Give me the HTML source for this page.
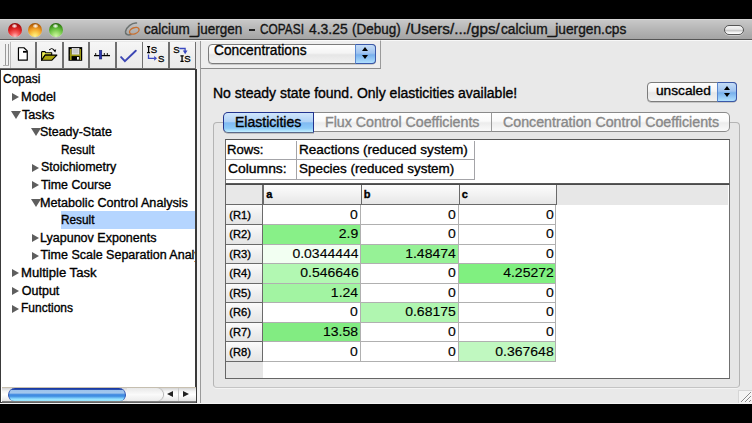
<!DOCTYPE html>
<html><head><meta charset="utf-8"><style>
*{margin:0;padding:0;box-sizing:border-box}
html,body{width:752px;height:423px;overflow:hidden;background:#000}
body{position:relative;font-family:"Liberation Sans",sans-serif;color:#000}
.a{position:absolute}
.t{position:absolute;white-space:nowrap;line-height:1}
.tx{-webkit-text-stroke:0.35px currentColor}
.tl{position:absolute;width:14px;height:14px;border-radius:50%;box-shadow:0 0.5px 0.8px rgba(230,240,240,.7)}
.hl{position:absolute;left:4.5px;top:1.6px;width:5px;height:3.4px;border-radius:50%;background:radial-gradient(ellipse at 50% 50%,rgba(255,255,255,1),rgba(255,255,255,.5) 55%,rgba(255,255,255,0))}
.tri-r{position:absolute;width:0;height:0;border-top:4.6px solid transparent;border-bottom:4.6px solid transparent;border-left:7.8px solid #5e5e5e}
.tri-d{position:absolute;width:0;height:0;border-left:5px solid transparent;border-right:5px solid transparent;border-top:8.3px solid #5e5e5e}
.num{position:absolute;line-height:1;white-space:nowrap;text-align:right;font-size:12.4px;-webkit-text-stroke:0.12px #000}
.num span{display:inline-block;transform:scaleX(1.13);transform-origin:100% 50%}
</style></head><body>
<div class="a" style="left:0px;top:19px;width:752px;height:385px;background:#e9e9e9"></div>
<div class="a" style="left:0px;top:19px;width:752px;height:21px;background:linear-gradient(#e2e2e2 0px,#c8c8c8 1px,#b6b6b6 10px,#a4a4a4 20px);border-bottom:1px solid #555"></div>
<div class="tl" style="left:7.699999999999999px;top:22.9px;background:radial-gradient(circle at 50% 95%,#ffc0c0 0,#f86060 25%,#e02828 50%,#b01010 75%,#6a0808 100%)"><div class="hl"></div></div>
<div class="tl" style="left:28.200000000000003px;top:22.9px;background:radial-gradient(circle at 50% 95%,#fff490 0,#fcd050 25%,#f0a028 50%,#c06808 75%,#703808 100%)"><div class="hl"></div></div>
<div class="tl" style="left:48.8px;top:22.9px;background:radial-gradient(circle at 50% 95%,#d0f8a8 0,#a0e070 25%,#68c040 50%,#3a8a18 75%,#123a08 100%)"><div class="hl"></div></div>
<svg class="a" style="left:123px;top:21px" width="20" height="17" viewBox="0 0 20 17">
<path d="M13.5 2 C9 1.5 3.5 6 2.5 10.5 C2 13.5 5 14.5 8 13.5" fill="none" stroke="#6c7270" stroke-width="1.5" stroke-linecap="round"/>
<ellipse cx="11.3" cy="9.8" rx="5" ry="3" transform="rotate(-22 11.3 9.8)" fill="none" stroke="#c87030" stroke-width="1.4"/>
</svg>
<div class="t tx" style="left:144.00px;top:21.76px;font-size:14px;transform:scaleX(0.9627);transform-origin:0 0;color:#141414">calcium_juergen</div>
<div class="a" style="left:249.4px;top:29.3px;width:5.4px;height:1.3px;background:#222"></div>
<div class="t tx" style="left:260.10px;top:21.76px;font-size:14px;transform:scaleX(0.8471);transform-origin:0 0;color:#141414">COPASI</div>
<div class="t tx" style="left:308.80px;top:21.76px;font-size:14px;transform:scaleX(0.9923);transform-origin:0 0;color:#141414">4.3.25</div>
<div class="t tx" style="left:352.14px;top:21.76px;font-size:14px;transform:scaleX(0.9633);transform-origin:0 0;color:#141414">(Debug)</div>
<div class="t tx" style="left:406.40px;top:21.76px;font-size:14px;transform:scaleX(1.0862);transform-origin:0 0;color:#141414">/Users/.../gps/</div>
<div class="t tx" style="left:501.30px;top:21.76px;font-size:14px;transform:scaleX(0.9819);transform-origin:0 0;color:#141414">calcium_juergen.cps</div>
<div class="a" style="left:724.4px;top:24.9px;width:19.8px;height:10px;border-radius:5px;border:1.3px solid #555;box-shadow:0 0.7px 0.5px rgba(255,255,255,.5);background:linear-gradient(#f4f4f4,#e8e8e8 40%,#c8c8c8 55%,#f8f8f8 85%,#ffffff)"></div>
<div class="a" style="left:0px;top:40px;width:752px;height:1px;background:#f8f8f8"></div>
<div class="a" style="left:0px;top:40px;width:196px;height:29px;background:#e8e8e8;border-top:1px solid #fafafa;border-bottom:1.5px solid #6c6c6c"></div>
<div class="a" style="left:0px;top:41px;width:10px;height:26.5px;background:#f2f2f2"></div>
<div class="a" style="left:4.6px;top:43.6px;width:1.1px;height:22px;background:#9a9a9a"></div>
<div class="a" style="left:7.7px;top:43.6px;width:1.1px;height:22px;background:#9a9a9a"></div>
<div class="a" style="left:3.2px;top:65.2px;width:6px;height:0.8px;background:#b0b0b0"></div>
<div class="a" style="left:10px;top:42px;width:26px;height:25.5px;background:linear-gradient(#f6f6f6,#efefef 50%,#ebebeb)"></div>
<div class="a" style="left:36.8px;top:42px;width:25.9px;height:25.5px;background:linear-gradient(#f6f6f6,#efefef 50%,#ebebeb)"></div>
<div class="a" style="left:63.5px;top:42px;width:25.6px;height:25.5px;background:linear-gradient(#f6f6f6,#efefef 50%,#ebebeb)"></div>
<div class="a" style="left:89.9px;top:42px;width:25.7px;height:25.5px;background:linear-gradient(#f6f6f6,#efefef 50%,#ebebeb)"></div>
<div class="a" style="left:116.4px;top:42px;width:25.9px;height:25.5px;background:linear-gradient(#f6f6f6,#efefef 50%,#ebebeb)"></div>
<div class="a" style="left:143.1px;top:42px;width:25.7px;height:25.5px;background:linear-gradient(#f6f6f6,#efefef 50%,#ebebeb)"></div>
<div class="a" style="left:169.6px;top:42px;width:25.6px;height:25.5px;background:linear-gradient(#f6f6f6,#efefef 50%,#ebebeb)"></div>
<div class="a" style="left:35.3px;top:41.5px;width:1.7px;height:26.5px;background:#707070"></div>
<div class="a" style="left:62.0px;top:41.5px;width:1.7px;height:26.5px;background:#707070"></div>
<div class="a" style="left:88.39999999999999px;top:41.5px;width:1.7px;height:26.5px;background:#707070"></div>
<div class="a" style="left:114.89999999999999px;top:41.5px;width:1.7px;height:26.5px;background:#707070"></div>
<div class="a" style="left:141.60000000000002px;top:41.5px;width:1.7px;height:26.5px;background:#707070"></div>
<div class="a" style="left:168.10000000000002px;top:41.5px;width:1.7px;height:26.5px;background:#707070"></div>
<div class="a" style="left:194.5px;top:41.5px;width:1.7px;height:26.5px;background:#707070"></div>
<div class="a" style="left:9.8px;top:42px;width:0.9px;height:26px;background:#bcbcbc"></div>
<svg class="a" style="left:12px;top:44px" width="184" height="22" viewBox="0 0 184 22">
<path d="M6.45 3.75 H11.9 L15.25 6.9 V16.15 H6.45 Z" fill="#fff" stroke="#000" stroke-width="1.2" stroke-linejoin="round"/>
<path d="M11 7.8 H14.9" stroke="#000" stroke-width="1.8"/>
<path d="M29.6 16.3 V8.3 L29.9 7.6 H33.1 L33.6 8.8 H39.7 V11.1 H33.1 Z" fill="#f0f050" stroke="#000" stroke-width="1.1" stroke-linejoin="round"/>
<path d="M29.6 16.3 L33.1 11.1 H44.9 L39.7 16.3 Z" fill="#aca610" stroke="#000" stroke-width="1.1" stroke-linejoin="round"/>
<path d="M37.0 6.0 Q39.6 3.3 42.0 5.6" fill="none" stroke="#000" stroke-width="1"/>
<path d="M41.0 6.0 L44.2 5.6 L43.3 8.5 Z" fill="#000"/>
<rect x="56.5" y="3.1" width="13.7" height="13.7" fill="#000"/>
<rect x="57.9" y="5" width="1.7" height="11" fill="#9c9810"/>
<rect x="67.6" y="5" width="1.4" height="11" fill="#9c9810"/>
<rect x="57.9" y="10.2" width="11.1" height="1.9" fill="#9c9810"/>
<rect x="60.1" y="4.6" width="6.9" height="5.5" fill="#cacaca" stroke="#fff" stroke-width="0.7"/>
<rect x="65" y="13" width="1.9" height="2.6" fill="#f4f4f4"/>
<path d="M82 11.6 H98" stroke="#000" stroke-width="1.3"/>
<path d="M83.7 11.6 V9 M92.3 11.6 V9 M95.3 11.6 V9" stroke="#000" stroke-width="0.9"/>
<rect x="87.3" y="6.3" width="2.5" height="8.7" fill="#2a36b0" stroke="#101860" stroke-width="0.5"/>
<path d="M109.1 13.1 L112.9 17.2 L123.8 6.7" fill="none" stroke="#3c46b4" stroke-width="1.9" stroke-linecap="round"/>
<path d="M135.1 2.7 H138.1 M136.6 2.1 V9.2 M135.1 8.6 H138.1" stroke="#000" stroke-width="1.3"/>
<text x="138.7" y="9.2" font-family="Liberation Sans" font-size="9.6" fill="#000" stroke="#000" stroke-width="0.3">S</text>
<text x="145.9" y="18" font-family="Liberation Sans" font-size="9.6" fill="#000" stroke="#000" stroke-width="0.3">S</text>
<path d="M136.5 10.4 V14.3 H142.6" fill="none" stroke="#3a48c0" stroke-width="1.3"/>
<path d="M142.2 12 L145 14.3 L142.2 16.8 Z" fill="#3a48c0"/>
<text x="161.3" y="9.2" font-family="Liberation Sans" font-size="9.6" fill="#000" stroke="#000" stroke-width="0.3">S</text>
<path d="M168.4 11.9 H171.7 M170.05 11.3 V18 M168.4 17.4 H171.7" stroke="#000" stroke-width="1.3"/>
<text x="172.2" y="18" font-family="Liberation Sans" font-size="9.6" fill="#000" stroke="#000" stroke-width="0.3">S</text>
<path d="M167.4 4.5 H173.1 V7" fill="none" stroke="#3a48c0" stroke-width="1.3"/>
<path d="M170.8 6.4 L175.5 6.4 L173.15 10.2 Z" fill="#3a48c0"/>
</svg>
<div class="a" style="left:0px;top:69px;width:197px;height:334px;background:#fff;border:1.5px solid #3a3a3a;border-top:1px solid #3a3a3a"></div>
<div class="a" style="left:60.5px;top:210.9px;width:134.5px;height:18.1px;background:#b5d5ff"></div>
<div class="a" style="left:0;top:69px;width:195.2px;height:318px;overflow:hidden">
<div class="t tx" style="left:2.50px;top:4.30px;font-size:12.5px;transform:scaleX(0.9615);transform-origin:0 0;">Copasi</div>
<div class="tri-r" style="left:12.40px;top:24.30px"></div>
<div class="t tx" style="left:20.88px;top:21.90px;font-size:12.5px;transform:scaleX(1.0242);transform-origin:0 0;">Model</div>
<div class="tri-d" style="left:11.40px;top:41.80px"></div>
<div class="t tx" style="left:22.30px;top:39.50px;font-size:12.5px;transform:scaleX(1.0125);transform-origin:0 0;">Tasks</div>
<div class="tri-d" style="left:31.00px;top:59.40px"></div>
<div class="t tx" style="left:40.11px;top:57.10px;font-size:12.5px;transform:scaleX(0.9944);transform-origin:0 0;">Steady-State</div>
<div class="t tx" style="left:60.76px;top:74.70px;font-size:12.5px;transform:scaleX(0.9429);transform-origin:0 0;">Result</div>
<div class="tri-r" style="left:32.00px;top:94.70px"></div>
<div class="t tx" style="left:40.81px;top:92.30px;font-size:12.5px;transform:scaleX(0.9947);transform-origin:0 0;">Stoichiometry</div>
<div class="tri-r" style="left:32.00px;top:112.30px"></div>
<div class="t tx" style="left:41.40px;top:109.90px;font-size:12.5px;transform:scaleX(0.9873);transform-origin:0 0;">Time Course</div>
<div class="tri-d" style="left:31.00px;top:129.80px"></div>
<div class="t tx" style="left:40.29px;top:127.50px;font-size:12.5px;transform:scaleX(1.0090);transform-origin:0 0;">Metabolic Control Analysis</div>
<div class="t tx" style="left:60.76px;top:145.10px;font-size:12.5px;transform:scaleX(0.9429);transform-origin:0 0;">Result</div>
<div class="tri-r" style="left:32.00px;top:165.10px"></div>
<div class="t tx" style="left:40.20px;top:162.70px;font-size:12.5px;transform:scaleX(1.0017);transform-origin:0 0;">Lyapunov Exponents</div>
<div class="tri-r" style="left:32.00px;top:182.70px"></div>
<div class="t tx" style="left:40.60px;top:180.30px;font-size:12.5px;">Time Scale Separation Analysis</div>
<div class="tri-r" style="left:12.40px;top:200.30px"></div>
<div class="t tx" style="left:20.75px;top:197.90px;font-size:12.5px;transform:scaleX(1.0493);transform-origin:0 0;">Multiple Task</div>
<div class="tri-r" style="left:12.40px;top:217.90px"></div>
<div class="t tx" style="left:21.80px;top:215.50px;font-size:12.5px;transform:scaleX(1.0000);transform-origin:0 0;">Output</div>
<div class="tri-r" style="left:12.40px;top:235.50px"></div>
<div class="t tx" style="left:20.84px;top:233.10px;font-size:12.5px;transform:scaleX(0.9585);transform-origin:0 0;">Functions</div>
</div>
<div class="a" style="left:196.5px;top:69px;width:3.2px;height:334px;background:#f3f3f3"></div>
<div class="a" style="left:195px;top:69px;width:1.5px;height:334px;background:#3a3a3a"></div>
<div class="a" style="left:1.5px;top:386.8px;width:194px;height:14.2px;background:linear-gradient(#d4d4d4,#f4f4f4 25%,#ffffff 50%,#f0f0f0 80%,#e4e4e4);border-top:1px solid #c8c0b0"></div>
<div class="a" style="left:1.5px;top:400.6px;width:194px;height:2.4px;background:linear-gradient(#8a8a8a,#555)"></div>
<div class="a" style="left:8px;top:387.8px;width:118px;height:12.8px;border-radius:7px 7px 6px 6px;background:linear-gradient(#1838a0 0,#1c40a8 11%,#9cc2ec 17%,#a4c8ee 38%,#4a90e2 50%,#3c8ae0 62%,#80d0fa 80%,#a4eeff 92%,#90d8f8 100%);border-left:1px solid #2a50b0;border-right:1px solid #2a50b0"></div>
<div class="a" style="left:127px;top:387.8px;width:36px;height:12.8px;border-radius:0 7px 7px 0;background:linear-gradient(#e8e8e8,#fafafa 50%,#ececec);box-shadow:1px 0 1px #aaa"></div>
<div class="a" style="left:177.5px;top:388px;width:0.8px;height:13px;background:#c8c8c8"></div>
<div class="a" style="left:167px;top:391px;width:0;height:0;border-top:3.3px solid transparent;border-bottom:3.3px solid transparent;border-right:6px solid #222"></div>
<div class="a" style="left:183px;top:391px;width:0;height:0;border-top:3.3px solid transparent;border-bottom:3.3px solid transparent;border-left:6px solid #222"></div>
<div class="a" style="left:199.6px;top:41px;width:1px;height:362px;background:#9a9a9a"></div>
<div class="a" style="left:200.6px;top:40px;width:180.4px;height:29px;background:#eeeeee;border-top:1px solid #fbfbfb;border-right:1.2px solid #9a9a9a;border-bottom:1.2px solid #8c8c8c"></div>
<div class="a" style="left:208px;top:43.6px;width:167.5px;height:20.2px;border-radius:4px;border:1px solid #7c7c7c;background:linear-gradient(#fefefe,#f4f4f4 45%,#e6e6e6 55%,#f2f2f2);box-shadow:0 0.6px 0.6px rgba(0,0,0,.3)"></div>
<div class="a" style="left:355px;top:43.6px;width:20.5px;height:20.2px;border-radius:0 4px 4px 0;border:1px solid #3a58a8;border-left:1px solid #5a88d0;background:linear-gradient(#c4dcf6,#a0c4f0 45%,#78b0ec 55%,#b0e0ff)"></div>
<div class="a" style="left:361.6px;top:47.1px;width:0;height:0;border-left:3px solid transparent;border-right:3px solid transparent;border-bottom:4.4px solid #000"></div>
<div class="a" style="left:361.6px;top:54.8px;width:0;height:0;border-left:3px solid transparent;border-right:3px solid transparent;border-top:4.4px solid #000"></div>
<div class="t tx" style="left:214.00px;top:43.99px;font-size:13.8px;transform:scaleX(0.9968);transform-origin:0 0;">Concentrations</div>
<div class="t tx" style="left:212.60px;top:85.56px;font-size:14px;transform:scaleX(0.9997);transform-origin:0 0;">No steady state found. Only elasticities available!</div>
<div class="a" style="left:647px;top:82.4px;width:89.5px;height:19.8px;border-radius:4px;border:1px solid #7c7c7c;background:linear-gradient(#fefefe,#f4f4f4 45%,#e6e6e6 55%,#f2f2f2);box-shadow:0 0.6px 0.6px rgba(0,0,0,.3)"></div>
<div class="a" style="left:717px;top:82.4px;width:19.5px;height:19.8px;border-radius:0 4px 4px 0;border:1px solid #3a58a8;border-left:1px solid #5a88d0;background:linear-gradient(#c4dcf6,#a0c4f0 45%,#78b0ec 55%,#b0e0ff)"></div>
<div class="a" style="left:723.5px;top:86px;width:0;height:0;border-left:3px solid transparent;border-right:3px solid transparent;border-bottom:4.4px solid #000"></div>
<div class="a" style="left:723.5px;top:93.4px;width:0;height:0;border-left:3px solid transparent;border-right:3px solid transparent;border-top:4.4px solid #000"></div>
<div class="t tx" style="left:655.58px;top:84.34px;font-size:13.5px;transform:scaleX(1.0151);transform-origin:0 0;">unscaled</div>
<div class="a" style="left:212.6px;top:121.8px;width:527.8px;height:266.2px;border:1px solid #b4b4b4;border-bottom-color:#c4c4c4;border-radius:4px;background:#e6e6e6;box-shadow:0 1px 0 #f4f4f4"></div>
<div class="a" style="left:222.8px;top:112.2px;width:91px;height:20.4px;border-radius:5px 0 0 5px;border:1px solid #22348e;border-bottom-color:#5a6a8a;box-shadow:0 0.6px 0.6px rgba(0,0,0,.35);background:linear-gradient(#d0e6fc,#b0d2f6 45%,#80baf2 52%,#8ccaf8 80%,#c4f0ff)"></div>
<div class="a" style="left:313.6px;top:112.2px;width:178px;height:20.2px;border:1px solid #8a8a8a;border-left:none;background:linear-gradient(#ffffff,#fafafa 45%,#ececec 55%,#fafafa)"></div>
<div class="a" style="left:491.4px;top:112.2px;width:239px;height:20.2px;border-radius:0 5px 5px 0;border:1px solid #8a8a8a;border-left:1px solid #9a9a9a;background:linear-gradient(#ffffff,#fafafa 45%,#ececec 55%,#fafafa)"></div>
<div class="t tx" style="left:234.50px;top:115.26px;font-size:14px;transform:scaleX(1.0015);transform-origin:0 0;">Elasticities</div>
<div class="t tx" style="left:324.89px;top:115.16px;font-size:14px;transform:scaleX(1.0146);transform-origin:0 0;color:#888">Flux Control Coefficients</div>
<div class="t tx" style="left:503.29px;top:115.16px;font-size:14px;transform:scaleX(1.0147);transform-origin:0 0;color:#888">Concentration Control Coefficients</div>
<div class="a" style="left:224.5px;top:139.3px;width:505px;height:44.5px;background:#fff;border:1px solid #6a6a6a;border-right:1.6px solid #707070;border-top:1.5px solid #555;border-bottom:1.2px solid #5a5a5a"></div>
<div class="a" style="left:225.5px;top:159px;width:249.5px;height:1px;background:#a4a4a8"></div>
<div class="a" style="left:225.5px;top:178.6px;width:249.5px;height:1px;background:#a4a4a8"></div>
<div class="a" style="left:296.3px;top:140.5px;width:1px;height:38.5px;background:#a4a4a8"></div>
<div class="a" style="left:473.6px;top:140.5px;width:1px;height:38.5px;background:#a4a4a8"></div>
<div class="t tx" style="left:227.23px;top:142.64px;font-size:13.5px;transform:scaleX(0.9722);transform-origin:0 0;">Rows:</div>
<div class="t tx" style="left:298.80px;top:142.64px;font-size:13.5px;transform:scaleX(1.0042);transform-origin:0 0;">Reactions (reduced system)</div>
<div class="t tx" style="left:228.20px;top:161.84px;font-size:13.5px;transform:scaleX(1.0286);transform-origin:0 0;">Columns:</div>
<div class="t tx" style="left:298.61px;top:161.84px;font-size:13.5px;transform:scaleX(0.9948);transform-origin:0 0;">Species (reduced system)</div>
<div class="a" style="left:224.5px;top:183.8px;width:505px;height:195px;background:#fff;border:1px solid #666;border-right:1.6px solid #707070;border-top:1.6px solid #4a4a4a"></div>
<div class="a" style="left:225.5px;top:185.4px;width:502px;height:20px;background:#e7e7e7"></div>
<div class="a" style="left:225.5px;top:185.4px;width:37.5px;height:20px;background:#e8e8e8;border-right:1px solid #6a6a6a;border-bottom:1px solid #6a6a6a"></div>
<div class="a" style="left:263.0px;top:185.4px;width:98.5px;height:20px;background:linear-gradient(#fcfcfc,#f2f2f2 50%,#e6e6e6);border-left:1px solid #6a6a6a;border-right:1px solid #6a6a6a;border-bottom:1px solid #6a6a6a"></div>
<div class="t tx" style="left:266.20px;top:189.24px;font-size:11px;font-weight:bold">a</div>
<div class="a" style="left:360.5px;top:185.4px;width:99.0px;height:20px;background:linear-gradient(#fcfcfc,#f2f2f2 50%,#e6e6e6);border-left:1px solid #6a6a6a;border-right:1px solid #6a6a6a;border-bottom:1px solid #6a6a6a"></div>
<div class="t tx" style="left:363.70px;top:189.24px;font-size:11px;font-weight:bold">b</div>
<div class="a" style="left:458.5px;top:185.4px;width:98.4px;height:20px;background:linear-gradient(#fcfcfc,#f2f2f2 50%,#e6e6e6);border-left:1px solid #6a6a6a;border-right:1px solid #6a6a6a;border-bottom:1px solid #6a6a6a"></div>
<div class="t tx" style="left:461.70px;top:189.24px;font-size:11px;font-weight:bold">c</div>
<div class="a" style="left:225.5px;top:205.4px;width:37.5px;height:19.57px;background:linear-gradient(#fbfbfb,#efefef 50%,#e4e4e4);border-right:1px solid #6a6a6a;border-bottom:1px solid #6a6a6a"></div>
<div class="t tx" style="left:229.30px;top:209.51px;font-size:11.2px;">(R1)</div>
<div class="a" style="left:263.0px;top:205.4px;width:97.5px;height:19.57px;background:#fff;border-right:1px solid #b0b0b0;border-bottom:1px solid #b0b0b0"></div>
<div class="num" style="left:263.0px;top:208.52px;width:95.20px"><span>0</span></div>
<div class="a" style="left:360.5px;top:205.4px;width:98.0px;height:19.57px;background:#fff;border-right:1px solid #b0b0b0;border-bottom:1px solid #b0b0b0"></div>
<div class="num" style="left:360.5px;top:208.52px;width:95.70px"><span>0</span></div>
<div class="a" style="left:458.5px;top:205.4px;width:97.4px;height:19.57px;background:#fff;border-right:1px solid #b0b0b0;border-bottom:1px solid #b0b0b0"></div>
<div class="num" style="left:458.5px;top:208.52px;width:95.10px"><span>0</span></div>
<div class="a" style="left:225.5px;top:224.97px;width:37.5px;height:19.57px;background:linear-gradient(#fbfbfb,#efefef 50%,#e4e4e4);border-right:1px solid #6a6a6a;border-bottom:1px solid #6a6a6a"></div>
<div class="t tx" style="left:229.30px;top:229.08px;font-size:11.2px;">(R2)</div>
<div class="a" style="left:263.0px;top:224.97px;width:97.5px;height:19.57px;background:#88f088;border-right:1px solid #b0b0b0;border-bottom:1px solid #b0b0b0"></div>
<div class="num" style="left:263.0px;top:228.09px;width:95.20px"><span>2.9</span></div>
<div class="a" style="left:360.5px;top:224.97px;width:98.0px;height:19.57px;background:#fff;border-right:1px solid #b0b0b0;border-bottom:1px solid #b0b0b0"></div>
<div class="num" style="left:360.5px;top:228.09px;width:95.70px"><span>0</span></div>
<div class="a" style="left:458.5px;top:224.97px;width:97.4px;height:19.57px;background:#fff;border-right:1px solid #b0b0b0;border-bottom:1px solid #b0b0b0"></div>
<div class="num" style="left:458.5px;top:228.09px;width:95.10px"><span>0</span></div>
<div class="a" style="left:225.5px;top:244.54px;width:37.5px;height:19.57px;background:linear-gradient(#fbfbfb,#efefef 50%,#e4e4e4);border-right:1px solid #6a6a6a;border-bottom:1px solid #6a6a6a"></div>
<div class="t tx" style="left:229.30px;top:248.65px;font-size:11.2px;">(R3)</div>
<div class="a" style="left:263.0px;top:244.54px;width:97.5px;height:19.57px;background:#f2fff2;border-right:1px solid #b0b0b0;border-bottom:1px solid #b0b0b0"></div>
<div class="num" style="left:263.0px;top:247.66px;width:95.20px"><span>0.0344444</span></div>
<div class="a" style="left:360.5px;top:244.54px;width:98.0px;height:19.57px;background:#96f296;border-right:1px solid #b0b0b0;border-bottom:1px solid #b0b0b0"></div>
<div class="num" style="left:360.5px;top:247.66px;width:95.70px"><span>1.48474</span></div>
<div class="a" style="left:458.5px;top:244.54px;width:97.4px;height:19.57px;background:#fff;border-right:1px solid #b0b0b0;border-bottom:1px solid #b0b0b0"></div>
<div class="num" style="left:458.5px;top:247.66px;width:95.10px"><span>0</span></div>
<div class="a" style="left:225.5px;top:264.11px;width:37.5px;height:19.57px;background:linear-gradient(#fbfbfb,#efefef 50%,#e4e4e4);border-right:1px solid #6a6a6a;border-bottom:1px solid #6a6a6a"></div>
<div class="t tx" style="left:229.30px;top:268.22px;font-size:11.2px;">(R4)</div>
<div class="a" style="left:263.0px;top:264.11px;width:97.5px;height:19.57px;background:#b2f8b2;border-right:1px solid #b0b0b0;border-bottom:1px solid #b0b0b0"></div>
<div class="num" style="left:263.0px;top:267.23px;width:95.20px"><span>0.546646</span></div>
<div class="a" style="left:360.5px;top:264.11px;width:98.0px;height:19.57px;background:#fff;border-right:1px solid #b0b0b0;border-bottom:1px solid #b0b0b0"></div>
<div class="num" style="left:360.5px;top:267.23px;width:95.70px"><span>0</span></div>
<div class="a" style="left:458.5px;top:264.11px;width:97.4px;height:19.57px;background:#80f080;border-right:1px solid #b0b0b0;border-bottom:1px solid #b0b0b0"></div>
<div class="num" style="left:458.5px;top:267.23px;width:95.10px"><span>4.25272</span></div>
<div class="a" style="left:225.5px;top:283.68px;width:37.5px;height:19.57px;background:linear-gradient(#fbfbfb,#efefef 50%,#e4e4e4);border-right:1px solid #6a6a6a;border-bottom:1px solid #6a6a6a"></div>
<div class="t tx" style="left:229.30px;top:287.79px;font-size:11.2px;">(R5)</div>
<div class="a" style="left:263.0px;top:283.68px;width:97.5px;height:19.57px;background:#a2f4a2;border-right:1px solid #b0b0b0;border-bottom:1px solid #b0b0b0"></div>
<div class="num" style="left:263.0px;top:286.80px;width:95.20px"><span>1.24</span></div>
<div class="a" style="left:360.5px;top:283.68px;width:98.0px;height:19.57px;background:#fff;border-right:1px solid #b0b0b0;border-bottom:1px solid #b0b0b0"></div>
<div class="num" style="left:360.5px;top:286.80px;width:95.70px"><span>0</span></div>
<div class="a" style="left:458.5px;top:283.68px;width:97.4px;height:19.57px;background:#fff;border-right:1px solid #b0b0b0;border-bottom:1px solid #b0b0b0"></div>
<div class="num" style="left:458.5px;top:286.80px;width:95.10px"><span>0</span></div>
<div class="a" style="left:225.5px;top:303.25px;width:37.5px;height:19.57px;background:linear-gradient(#fbfbfb,#efefef 50%,#e4e4e4);border-right:1px solid #6a6a6a;border-bottom:1px solid #6a6a6a"></div>
<div class="t tx" style="left:229.30px;top:307.36px;font-size:11.2px;">(R6)</div>
<div class="a" style="left:263.0px;top:303.25px;width:97.5px;height:19.57px;background:#fff;border-right:1px solid #b0b0b0;border-bottom:1px solid #b0b0b0"></div>
<div class="num" style="left:263.0px;top:306.37px;width:95.20px"><span>0</span></div>
<div class="a" style="left:360.5px;top:303.25px;width:98.0px;height:19.57px;background:#b0f6b0;border-right:1px solid #b0b0b0;border-bottom:1px solid #b0b0b0"></div>
<div class="num" style="left:360.5px;top:306.37px;width:95.70px"><span>0.68175</span></div>
<div class="a" style="left:458.5px;top:303.25px;width:97.4px;height:19.57px;background:#fff;border-right:1px solid #b0b0b0;border-bottom:1px solid #b0b0b0"></div>
<div class="num" style="left:458.5px;top:306.37px;width:95.10px"><span>0</span></div>
<div class="a" style="left:225.5px;top:322.82px;width:37.5px;height:19.57px;background:linear-gradient(#fbfbfb,#efefef 50%,#e4e4e4);border-right:1px solid #6a6a6a;border-bottom:1px solid #6a6a6a"></div>
<div class="t tx" style="left:229.30px;top:326.93px;font-size:11.2px;">(R7)</div>
<div class="a" style="left:263.0px;top:322.82px;width:97.5px;height:19.57px;background:#82ec82;border-right:1px solid #b0b0b0;border-bottom:1px solid #b0b0b0"></div>
<div class="num" style="left:263.0px;top:325.94px;width:95.20px"><span>13.58</span></div>
<div class="a" style="left:360.5px;top:322.82px;width:98.0px;height:19.57px;background:#fff;border-right:1px solid #b0b0b0;border-bottom:1px solid #b0b0b0"></div>
<div class="num" style="left:360.5px;top:325.94px;width:95.70px"><span>0</span></div>
<div class="a" style="left:458.5px;top:322.82px;width:97.4px;height:19.57px;background:#fff;border-right:1px solid #b0b0b0;border-bottom:1px solid #b0b0b0"></div>
<div class="num" style="left:458.5px;top:325.94px;width:95.10px"><span>0</span></div>
<div class="a" style="left:225.5px;top:342.39px;width:37.5px;height:19.57px;background:linear-gradient(#fbfbfb,#efefef 50%,#e4e4e4);border-right:1px solid #6a6a6a;border-bottom:1px solid #6a6a6a"></div>
<div class="t tx" style="left:229.30px;top:346.50px;font-size:11.2px;">(R8)</div>
<div class="a" style="left:263.0px;top:342.39px;width:97.5px;height:19.57px;background:#fff;border-right:1px solid #b0b0b0;border-bottom:1px solid #b0b0b0"></div>
<div class="num" style="left:263.0px;top:345.51px;width:95.20px"><span>0</span></div>
<div class="a" style="left:360.5px;top:342.39px;width:98.0px;height:19.57px;background:#fff;border-right:1px solid #b0b0b0;border-bottom:1px solid #b0b0b0"></div>
<div class="num" style="left:360.5px;top:345.51px;width:95.70px"><span>0</span></div>
<div class="a" style="left:458.5px;top:342.39px;width:97.4px;height:19.57px;background:#c0f8c0;border-right:1px solid #b0b0b0;border-bottom:1px solid #b0b0b0"></div>
<div class="num" style="left:458.5px;top:345.51px;width:95.10px"><span>0.367648</span></div>
<div class="a" style="left:225.5px;top:361.96px;width:37.5px;height:16.04px;background:#e6e6e6"></div>
<div class="a" style="left:738px;top:390px;width:14px;height:13px;background:#f4f4f4;border-left:1px solid #d6d6d6;border-top:1px solid #d6d6d6"></div>
<svg class="a" style="left:738px;top:389px" width="14" height="14" viewBox="0 0 14 14">
<path d="M3 13 L13 3 M7 13 L13 7 M11 13 L13 11" stroke="#8a8a8a" stroke-width="1"/>
<path d="M4 13 L13 4 M8 13 L13 8" stroke="#fff" stroke-width="0.7"/>
</svg>
<div class="a" style="left:0px;top:403px;width:752px;height:1px;background:#f4f4f4"></div>
<div class="a" style="left:0px;top:404px;width:752px;height:19px;background:#000"></div>
</body></html>
